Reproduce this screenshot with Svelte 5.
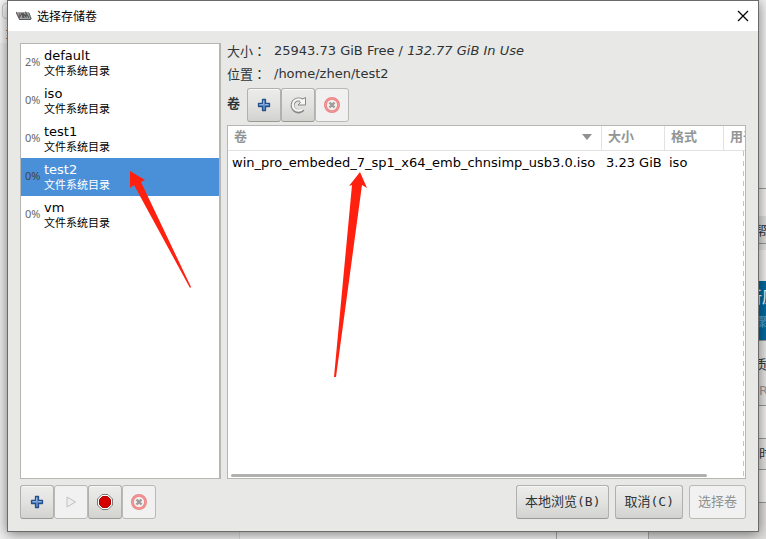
<script>
  const pools = [
    { name: 'default', used: '2%' },
    { name: 'iso', used: '0%' },
    { name: 'test1', used: '0%' },
    { name: 'test2', used: '0%' },
    { name: 'vm', used: '0%' }
  ];
  let selected = $state('test2');
</script>

{#snippet plus()}
  <svg width="16" height="16" viewBox="0 0 16 16" aria-hidden="true">
    <path d="M6.500 2.500h3v4h4v3h-4v4h-3v-4h-4v-3h4z" fill="#5f8fca" stroke="#264f8c" stroke-width="1.300" stroke-linejoin="round" />
    <path d="M7.500 3.500v4h-4M9 7.500h3.500" fill="none" stroke="#8fb3de" />
  </svg>
{/snippet}

{#snippet remove()}
  <svg width="18" height="18" viewBox="0 0 18 18" aria-hidden="true">
    <circle cx="9" cy="9" r="6.600" fill="#f3efee" stroke="#ec8484" stroke-width="2.800" />
    <circle cx="9" cy="9" r="6.500" fill="none" stroke="#f2a3a3" stroke-width=".7" />
    <path d="M6.500 6.500l5 5M11.500 6.500l-5 5" stroke="#9b9d9b" stroke-width="2.400" />
  </svg>
{/snippet}

<div class="desktop">
  <div class="behind" aria-hidden="true">
    <div class="left"><span class="tab"></span><span class="mark"></span></div>
    <div class="under"><i></i><i></i><i></i><i></i></div>
    <div class="right">
      <div class="s1"></div>
      <div class="s2"></div>
      <div class="s3">帮</div>
      <div class="s4"></div>
      <div class="s5"><b>新原</b><small>骤</small></div>
      <div class="s6"><span>质</span><em>R</em></div>
      <div class="s7"></div>
      <div class="s8">时</div>
      <div class="s9"></div>
      <div class="s10"></div>
    </div>
  </div>

  <section class="dialog">
    <header>
      <svg width="17" height="10" viewBox="0 0 17 10" aria-hidden="true">
        <path d="M1 1h12l3 7H3z" fill="#a3a6a7" />
        <path d="M0 1l3 6 3-5M6 2l1 5M8 7l-1-5 3 4V2l3 5" fill="none" stroke="#54585a" stroke-width="1.200" />
        <path d="M3 2l1 4" stroke="#b4484c" stroke-width="1.200" />
        <path d="M3 8.500h12" stroke="#55595b" />
        <path d="M13 2l2 6" stroke="#666" />
      </svg>
      <h1>选择存储卷</h1>
      <button class="close" aria-label="关闭">
        <svg width="12" height="12" viewBox="0 0 12 12"><path d="M1 1l10 10M11 1L1 11" stroke="#000" stroke-width="1.200" /></svg>
      </button>
    </header>

    <main>
      <div class="panes">
        <div class="pools">
          {#each pools as pool}
            <button class="pool" class:selected={pool.name === selected} onclick={() => (selected = pool.name)}>
              <span class="used">{pool.used}</span>
              <span class="label"><span class="name">{pool.name}</span><span class="kind">文件系统目录</span></span>
            </button>
          {/each}
        </div>

        <div class="details">
          <dl>
            <dt>大小<span>：</span></dt>
            <dd>25943.73 GiB Free / <i>132.77 GiB In Use</i></dd>
            <dt>位置<span>：</span></dt>
            <dd>/home/zhen/test2</dd>
          </dl>
          <div class="toolbar">
            <strong>卷</strong>
            <div class="group">
              <button class="btn icon" aria-label="新建卷">{@render plus()}</button>
              <button class="btn icon" aria-label="刷新">
                <svg width="18" height="18" viewBox="0 0 18 18" aria-hidden="true">
                  <path d="M14 13.500A6 6 0 1 1 13 4.500" fill="none" stroke="#858885" stroke-width="4" />
                  <path d="M16.500 1.500v7.500H9l2.500-2.500-2-1.500 3-1.500z" fill="#f6f6f5" stroke="#858885" />
                  <path d="M13.500 13A5.700 5.700 0 1 1 13.500 5" fill="none" stroke="#f6f6f5" stroke-width="2.200" />
                </svg>
              </button>
              <button class="btn icon" disabled aria-label="删除卷">{@render remove()}</button>
            </div>
          </div>
          <div class="volumes">
            <table>
              <colgroup><col class="c1" /><col class="c2" /><col class="c3" /><col class="c4" /></colgroup>
              <thead>
                <tr>
                  <th><div class="sort">卷<svg width="10" height="6" viewBox="0 0 10 6" aria-hidden="true"><path d="M0 0h10L5 6z" fill="#8e9192" /></svg></div></th>
                  <th>大小</th>
                  <th>格式</th>
                  <th>用于</th>
                </tr>
              </thead>
              <tbody>
                <tr><td>win_pro_embeded_7_sp1_x64_emb_chnsimp_usb3.0.iso</td><td>3.23 GiB</td><td>iso</td><td></td></tr>
              </tbody>
            </table>
            <div class="edge"></div>
            <div class="scroll"></div>
          </div>
        </div>
      </div>

      <footer>
        <div class="group">
          <button class="btn icon" aria-label="添加池">{@render plus()}</button>
          <button class="btn icon" disabled aria-label="启动池">
            <svg width="16" height="16" viewBox="0 0 16 16" aria-hidden="true"><path d="M4 3l8.500 5L4 13z" fill="#eee" stroke="#c0c1c0" /></svg>
          </button>
          <button class="btn icon" aria-label="停止池">
            <svg width="16" height="16" viewBox="0 0 16 16" aria-hidden="true">
              <path d="M5 .5h6L15.500 5v6L11 15.500H5L.5 11V5z" fill="#fff" stroke="#777975" />
              <path d="M5.500 2.500h5l3 3v5l-3 3h-5l-3-3v-5z" fill="#d40000" stroke="#b00000" />
            </svg>
          </button>
          <button class="btn icon" disabled aria-label="删除池">{@render remove()}</button>
        </div>
        <div class="actions">
          <button class="btn">本地浏览<span>(B)</span></button>
          <button class="btn">取消<span>(C)</span></button>
          <button class="btn" disabled>选择卷</button>
        </div>
      </footer>
    </main>

    <svg class="arrows" width="240" height="220" viewBox="0 0 240 220" aria-hidden="true">
      <path d="M0 0L15 9 11 11 61 116 60 117 4 14 0 17z" fill="#ff2010" />
      <path d="M230 1L237 17 232 14 206 206 204 206 222 14 219 15z" fill="#ff2010" />
    </svg>
  </section>
</div>

<style>
  :global(body) {
    font-family: 'DejaVu Sans', 'Noto Sans CJK SC', sans-serif;
    font-size: 13px;
    color: #2e3436;
  }
  * { box-sizing: border-box; }
  button { font: inherit; color: inherit; margin: 0; }

  .desktop {
    position: relative;
    display: flex;
    height: 100vh;
    padding: 0 7px 7px;
    overflow: hidden;
    background: #f0f0f0;
  }
  .behind { position: absolute; inset: 0; }
  .left { position: absolute; left: 0; top: 0; width: 8px; height: 100%; background: linear-gradient(#f8f8f8 43px, #efefef 43px); }
  .tab { display: block; width: 12px; height: 16px; margin: 3px 0 0 2px; border: 1px solid #ccc; border-radius: 4px; }
  .mark { display: block; width: 2px; height: 9px; margin: 11px 0 0 6px; border: solid #c8702d; border-width: 1px 0; }
  .under { position: absolute; bottom: 0; left: 0; right: 0; height: 8px; display: flex; background: #f4f4f4; }
  .under i { border-right: 1px solid #aaa; }
  .under i:nth-child(1) { flex: 240; border-color: #ddd; background: #f0f0f0; }
  .under i:nth-child(2) { flex: 317; }
  .under i:nth-child(3) { flex: 92; }
  .under i:nth-child(4) { flex: 117; border: 0; background: #e0dfde; }
  .right { position: absolute; right: 0; top: 0; bottom: 0; width: 12px; display: flex; flex-direction: column; overflow: hidden; background: #f2f1f0; }
  .right > div { flex: none; white-space: nowrap; overflow: hidden; border-bottom: 1px solid #999; }
  .s1 { height: 189px; background: #f0f0f0; }
  .s2 { height: 28px; }
  .right > .s2 { border-color: #ddd; }
  .s3 { height: 27px; line-height: 28px; background: #dfdedd; }
  .s4 { height: 37px; border-top: 6px solid #e4e3e2; }
  .right > .s4 { border-bottom: 0; }
  .s5 { height: 60px; background: #006ba1; color: #fff; }
  .s5 b { display: block; margin-left: -8px; font-weight: 400; font-size: 16px; line-height: 34px; }
  .s5 small { display: block; font-size: 13px; line-height: 14px; color: #58a4cd; }
  .s6 { height: 65px; background: #e7e6e5; }
  .s6 span { display: block; line-height: 48px; height: 42px; }
  .s6 em { font-style: normal; color: #999; margin-left: 5px; line-height: 14px; }
  .s7 { height: 33px; }
  .s8 { height: 31px; padding-left: 5px; line-height: 30px; background: #e7e6e5; }
  .s9 { height: 33px; }
  .s10 { height: 38px; background: #e0dfde; }

  .dialog {
    position: relative;
    display: flex;
    flex-direction: column;
    flex: 1;
    min-width: 0;
    border: 1px solid #6b6b6b;
    background: #e8e8e6;
    box-shadow: 0 2px 12px rgba(0, 0, 0, 0.5);
  }
  header { display: flex; align-items: center; height: 30px; padding: 0 9px 0 8px; background: #fff; }
  h1 { flex: 1; margin: 0 0 0 4px; font: 12px/18px 'Noto Sans CJK SC', sans-serif; color: #000; }
  .close { display: flex; padding: 0; border: 0; background: none; }

  main { flex: 1; display: flex; flex-direction: column; gap: 6px; padding: 12px; min-height: 0; }
  .panes { flex: 1; display: flex; gap: 6px; min-height: 0; }
  .pools { flex: none; width: 201px; border: 1px solid #b6b6b3; border-right-width: 2px; background: #fff; }
  .pool {
    display: flex;
    align-items: center;
    width: 100%;
    height: 38px;
    padding: 0 4px;
    border: 0;
    background: none;
    text-align: left;
    color: #000;
  }
  .used { width: 19px; padding-bottom: 2px; font: 11px/14px 'Noto Sans', sans-serif; color: #666; }
  .label { display: flex; flex-direction: column; padding-top: 2px; }
  .name { line-height: 16px; }
  .kind { font-size: 11px; line-height: 16px; }
  .selected { background: #4a90d9; color: #fff; }
  .selected .used { color: #444; }

  .details { flex: 1; min-width: 0; display: flex; flex-direction: column; }
  dl { display: grid; grid-template-columns: 47px 1fr; margin: -3px 0 2px; line-height: 22px; }
  dt { white-space: nowrap; }
  dt span { font-family: 'Noto Sans CJK TC', sans-serif; }
  dd { margin: 0; }
  .toolbar { display: flex; align-items: center; gap: 7px; margin-bottom: 3px; }
  .toolbar strong { line-height: 20px; padding-bottom: 2px; }
  .group { display: flex; }
  .btn {
    height: 34px;
    padding: 0 8px;
    border: 1px solid #b0b0ac;
    border-bottom-color: #999996;
    border-radius: 3px;
    background: linear-gradient(#ececea, #e2e2e0 50%, #d2d2cf);
    box-shadow: inset 0 1px #f8f8f8;
    line-height: 20px;
    white-space: nowrap;
  }
  .btn span { font-family: 'DejaVu Sans Mono', monospace; }
  .btn:disabled { border-color: #b9b9b6; background: #f1f1f1; color: #8e9192; box-shadow: none; }
  .btn.icon { display: flex; align-items: center; justify-content: center; width: 34px; padding: 0; }

  .volumes { position: relative; flex: 1; min-height: 0; overflow: hidden; border: 1px solid #b6b6b3; background: #fff; }
  table { width: 560px; table-layout: fixed; border-collapse: separate; border-spacing: 0; }
  .c1 { width: 374px; }
  .c2 { width: 63px; }
  .c3 { width: 59px; }
  .c4 { width: 64px; }
  th {
    height: 25px;
    padding: 0 6px 2px;
    border: solid #e2e2e2;
    border-width: 0 1px 1px 0;
    text-align: left;
    line-height: 20px;
    color: #929595;
  }
  .sort { display: flex; align-items: center; justify-content: space-between; padding-right: 3px; }
  td { height: 24px; padding: 0 4px; line-height: 20px; white-space: nowrap; color: #000; }
  .edge {
    position: absolute;
    top: 25px;
    right: 1px;
    bottom: 0;
    width: 1px;
    background: repeating-linear-gradient(#c4c4c4 0 5px, transparent 5px 10px);
  }
  .scroll { position: absolute; left: 3px; right: 38px; bottom: 1px; height: 3px; border-radius: 2px; background: #b0b0ae; }

  footer { display: flex; justify-content: space-between; }
  .actions { display: flex; gap: 6px; }
  .arrows { position: absolute; left: 122px; top: 170px; pointer-events: none; }
</style>
